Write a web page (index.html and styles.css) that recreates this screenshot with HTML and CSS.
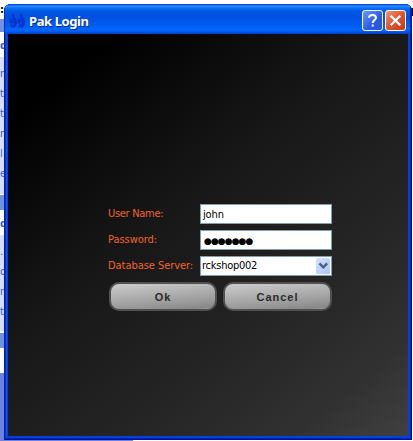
FILE: index.html
```html
<!DOCTYPE html>
<html lang="en">
<head>
<meta charset="utf-8">
<title>Pak Login</title>
<link rel="stylesheet" href="styles.css">
</head>
<body>
<div class="desktop">
  <aside class="tasks">
    <div class="gap first"><span class="dark">:</span></div>
    <div class="band"></div>
    <div class="gap head"><b>d</b></div>
    <div class="group long"><span>n</span><span>t</span><span>t</span><span>n</span><span>l</span><span>e</span></div>
    <div class="band second"></div>
    <div class="gap head"><b>d</b></div>
    <div class="group short"><span>.</span><span>o</span><span>r</span><span>t</span></div>
    <div class="band third"></div>
    <div class="gap head"></div>
    <div class="rest"></div>
  </aside>
  <div class="bottom-edge"></div>
  <div class="right-edge"></div>
</div>
<main class="window">
  <header class="titlebar">
    <svg class="logo" width="17" height="16" viewBox="0 0 17 16"><path d="M3 0C6 1 5 4 7 6C9 9 8 13 5 15L1 14L2 11L0 9L1 5L4 7L3 4ZM11 0C14 1 13 4 15 6C17 9 16 13 13 15L9 14L10 11L8 9L9 5L12 7L11 4Z" fill="#0634d2"/><path d="M4 10v2M12 9v2" stroke="#0860ee" stroke-width="1.2"/></svg>
    <h1>Pak Login</h1>
    <button class="caption help" aria-label="Help"><svg width="19" height="19" viewBox="0 0 19 19"><path d="M6 6.8Q6 4 9.6 4Q13 4 13 6.8C13 9 9.7 9 9.7 12M9.7 13.5v2" fill="none" stroke="#fff" stroke-width="2"/></svg></button>
    <button class="caption close" aria-label="Close"><svg width="19" height="19" viewBox="0 0 19 19"><path d="M4.7 4.7l9.6 9.6M14.3 4.7l-9.6 9.6" stroke="#fff" stroke-width="2.3"/></svg></button>
  </header>
  <section class="content">
    <form class="login">
      <div class="row"><span class="label l1">User Name:</span><div class="field"><span class="john">john</span></div></div>
      <div class="row"><span class="label l2">Password:</span><div class="field"><span class="dots">●●●●●●●</span></div></div>
      <div class="row"><span class="label l3">Database Server:</span><div class="field select"><span class="server">rckshop002</span><svg class="arrow" width="14" height="16" viewBox="0 0 14 16"><rect width="14" height="16" rx="1.5" fill="url(#g)"/><defs><linearGradient id="g" x2="1" y2="1"><stop stop-color="#d5e0fd"/><stop offset="1" stop-color="#adc5f6"/></linearGradient></defs><path d="M3.4 5.4L7.3 9.3L11.2 5.4" fill="none" stroke="#4d6185" stroke-width="2.4"/></svg></div></div>
      <div class="actions"><button type="button" class="ok">Ok</button><button type="button" class="cancel">Cancel</button></div>
    </form>
  </section>
</main>
</body>
</html>
```
FILE: styles.css
```css
* { box-sizing: border-box; }
body { margin: 0; width: 413px; height: 441px; overflow: hidden; background: #fff; font: 11px/14px "DejaVu Sans Condensed", "DejaVu Sans", sans-serif; }
.desktop { position: relative; height: 441px; background: #fff; }
.tasks { width: 5px; overflow: hidden; color: #3060c8; }
.tasks span, .tasks b { width: 5px; display: flex; }
.gap { overflow: hidden; }
.first { height: 19px; padding-top: 3px; }
.tasks .dark { color: #000; font-weight: bold; }
.band { height: 13px; background: #7191dd; }
.head { height: 25px; padding-top: 7px; }
.group { background: #d6dff7; overflow: hidden; }
.long { height: 137px; padding-top: 10px; }
.group span { height: 20px; }
.second { height: 16px; border-top: 1px solid #fff; }
.short { height: 96px; padding-top: 10px; }
.third { height: 17px; border-top: 2px solid #fff; }
.rest { height: 68px; background: #6c83dc; }
.bottom-edge { position: absolute; left: 0; bottom: 0; width: 133px; height: 1px; background: #6c83dc; }
.right-edge { position: absolute; right: 0; top: 8px; width: 3px; height: 8px; background: #111; }
.window {
  position: absolute; left: 4px; top: 4px; width: 408px; height: 436px;
  border-radius: 7px 7px 0 0; overflow: hidden;
  background: #0441dc; padding: 0 4px 4px;
  box-shadow: inset 1px 0 #0019a8, inset -1px 0 #00138c, inset 0 -1px #00138c, inset -2px -2px #0020b8, inset 2px 0 #0831d9, inset 3px 0 #0855ee;
}
.titlebar {
  height: 30px; margin: 0 -4px; padding: 3px 6px 0 6px; display: flex; align-items: center;
  background: linear-gradient(#0840c8 0, #0c5ce5 1px, #2f8cff 2px, #0873f7 4px, #0058e6 7px, #0050df 13px, #005bee 20px, #0067ff 26px, #0057e8 28px, #003dc5 30px);
  box-shadow: inset 1px 0 #0029c0, inset -2px 0 #0024b0;
}
.logo { margin: 0 3px 0 -1px; flex: none; }
h1 { margin: 0; flex: 1; color: #fff; font: bold 13px/18px "Noto Sans", sans-serif; letter-spacing: -.4px; text-shadow: 1px 1px #092b91; }
.caption { width: 21px; height: 21px; padding: 0; border: 1px solid #fff; border-radius: 3px; margin: 0 0 0 2px; display: grid; place-items: center; overflow: hidden; }
.help { background: linear-gradient(135deg, #6e98f6, #2a5be5 60%, #2852d2); }
.close { background: linear-gradient(135deg, #ec9679, #df5330 50%, #c53b10); }
.content { height: 402px; padding: 170px 0 0 100px; background: linear-gradient(140deg, #000 12%, #171717 42%, #262626 70%, #313131 87%, #404040); }
.login { width: 224px; display: grid; gap: 6px; }
.row { display: flex; justify-content: space-between; height: 20px; align-items: center; }
.label { color: #f3642b; white-space: nowrap; letter-spacing: -.05px; }
.l1 { letter-spacing: -.3px; }
.field { width: 132px; height: 20px; flex: none; border: 1px solid #7f9db9; background: #fff; color: #000; padding: 3px; display: flex; align-items: center; }
.john { padding-top: 2px; letter-spacing: -.15px; margin-left: -1px; }
.dots { font: 9px/12px "DejaVu Sans", sans-serif; letter-spacing: -.93px; padding-top: 1px; }
.select { padding: 0 1px 0 1px; justify-content: space-between; }
.server { letter-spacing: -.25px; }
.actions { display: flex; gap: 6px; padding-left: 1px; }
.actions button {
  width: 108px; height: 29px; padding: 0; border: 2px solid #505050; border-radius: 10px;
  background: linear-gradient(175deg, #cdcdcd 0, #b2b2b2 38%, #989898 75%, #888 93%, #aaa 100%);
  color: #2b2b2b; font: bold 11px/20px "Liberation Sans", sans-serif; letter-spacing: 1px;
}
.actions .cancel { width: 109px; }
```
